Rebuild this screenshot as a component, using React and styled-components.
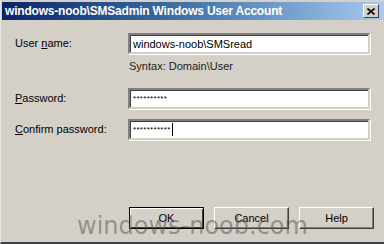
import styled, { createGlobalStyle } from 'styled-components';

const Global = createGlobalStyle`
  html, body { margin: 0; padding: 0; background: #d4d0c8; }
  body { font-family: "Liberation Sans", Arial, sans-serif; }
`;

const Window = styled.div`
  position: relative;
  width: 384px;
  height: 244px;
  box-sizing: border-box;
  background: #d4d0c8;
  border-left: 1px solid #e8e6e0;
  border-bottom: 2px solid #404040;
  padding: 2px 0 0 1px;
  overflow: hidden;
  display: flex;
  flex-direction: column;
`;

const TitleBar = styled.div`
  height: 18px;
  display: flex;
  align-items: center;
  justify-content: space-between;
  padding: 0 5px 0 3px;
  background: linear-gradient(to right, #0a246a 0%, #3a6ea5 45%, #a6caf0 100%);
  color: #fff;
  font-weight: bold;
  font-size: 12px;
  letter-spacing: -0.2px;
`;

const CloseButton = styled.div`
  width: 16px;
  height: 14px;
  box-sizing: border-box;
  background: #d4d0c8;
  border: 1px solid;
  border-color: #fff #404040 #404040 #fff;
  display: flex;
  align-items: center;
  justify-content: center;
`;

const Form = styled.div`
  display: grid;
  grid-template-columns: 113px 242px;
  padding: 13px 0 0 13px;
  font-size: 11px;
  color: #000;
`;

const Label = styled.div`
  height: 21px;
  line-height: 21px;
  margin-top: ${({ $gap }) => $gap || 0}px;
`;

const Field = styled.div`
  height: 21px;
  box-sizing: border-box;
  background: #fff;
  border: 2px solid;
  border-color: #808080 #d4d0c8 #d4d0c8 #808080;
  box-shadow: inset 1px 1px 0 #404040, 1px 1px 0 #fff;
  display: flex;
  align-items: center;
  padding-left: 3px;
  margin-top: ${({ $gap }) => $gap || 0}px;
  font-size: ${({ $mask }) => ($mask ? '8px' : '11px')};
  letter-spacing: ${({ $mask }) => ($mask ? '0.3px' : '0')};
`;

const Hint = styled.div`
  grid-column: 2;
  height: 14px;
  margin-top: 6px;
  padding-left: 1px;
  color: #222;
`;

const Caret = styled.span`
  display: inline-block;
  width: 1px;
  height: 13px;
  background: #000;
  margin-left: 1px;
`;

const Buttons = styled.div`
  margin-top: auto;
  margin-bottom: 13px;
  display: flex;
  gap: 10px;
  padding-left: 127px;
`;

const Button = styled.div`
  width: 75px;
  height: 22px;
  box-sizing: border-box;
  display: flex;
  align-items: center;
  justify-content: center;
  font-size: 11px;
  background: #d4d0c8;
  border: 1px solid;
  border-color: ${({ $default }) => ($default ? '#000' : '#fff #404040 #404040 #fff')};
  box-shadow: ${({ $default }) =>
    $default ? 'inset 1px 1px 0 #fff, inset -1px -1px 0 #404040' : 'inset -1px -1px 0 #808080'};
`;

const Watermark = styled.div`
  position: absolute;
  left: 76px;
  top: 212px;
  font-family: "DejaVu Sans", Verdana, sans-serif;
  font-size: 24px;
  color: rgba(80, 80, 80, 0.5);
  pointer-events: none;
  white-space: nowrap;
`;

export default function App() {
  return (
    <>
      <Global />
      <Window>
        <TitleBar>
          <span>windows-noob\SMSadmin Windows User Account</span>
          <CloseButton>
            <svg width="8" height="7" viewBox="0 0 8 7">
              <path d="M0.5 0.5 L7.5 6.5 M7.5 0.5 L0.5 6.5" stroke="#000" strokeWidth="1.6" />
            </svg>
          </CloseButton>
        </TitleBar>
        <Form>
          <Label>User <u>n</u>ame:</Label>
          <Field>windows-noob\SMSread</Field>
          <Hint>Syntax: Domain\User</Hint>
          <Label $gap={14}><u>P</u>assword:</Label>
          <Field $gap={14} $mask>**********</Field>
          <Label $gap={10}><u>C</u>onfirm password:</Label>
          <Field $gap={10} $mask>***********<Caret /></Field>
        </Form>
        <Buttons>
          <Button $default>OK</Button>
          <Button>Cancel</Button>
          <Button>Help</Button>
        </Buttons>
        <Watermark>windows-noob.com</Watermark>
      </Window>
    </>
  );
}
